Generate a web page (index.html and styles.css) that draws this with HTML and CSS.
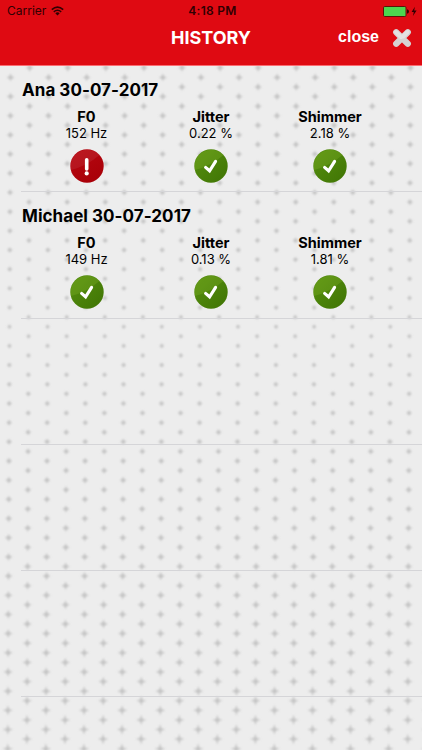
FILE: index.html
```html
<!DOCTYPE html>
<html lang="en">
<head>
    <meta charset="UTF-8">
    <title>History</title>
    <link rel="stylesheet" href="styles.css">
</head>
<body>

<!-- icons used in the list -->
<svg class="defs" width="0" height="0">
    <defs>
        <linearGradient id="green" x1="0" y1="0" x2="1" y2="1">
            <stop offset="0" stop-color="#579010"/>
            <stop offset="1" stop-color="#3f7404"/>
        </linearGradient>
        <linearGradient id="red" x1="0" y1="0" x2="0.6" y2="1">
            <stop offset="0" stop-color="#b80812"/>
            <stop offset="1" stop-color="#a90008"/>
        </linearGradient>
        <symbol id="ok" viewBox="0 0 34 34">
            <circle cx="17" cy="17" r="16.7" fill="url(#green)"/>
            <path d="M1 21 A16.7 16.7 0 0 1 29.5 6 Q17 17 1 21Z" fill="#8fc030" opacity="0.25"/>
            <path d="M11.6 18.4 L15.6 21.8 L21.6 12.4" fill="none" stroke="#fff" stroke-width="3.1" stroke-linecap="round"/>
        </symbol>
        <symbol id="bad" viewBox="0 0 34 34">
            <circle cx="17" cy="17" r="16.7" fill="url(#red)"/>
            <path d="M1 21 A16.7 16.7 0 0 1 29.5 6 Q17 17 1 21Z" fill="#fff" opacity="0.07"/>
            <path d="M16.7 10.8 V20" stroke="#fff" stroke-width="3.6" stroke-linecap="round"/>
            <circle cx="16.7" cy="24.4" r="2.1" fill="#fff"/>
        </symbol>
    </defs>
</svg>

<div class="app">
    <svg id="pattern" class="pattern" width="422" height="750"></svg>

    <div class="header">
        <div class="statusbar">
            <div class="carrier">
                <span>Carrier</span>
                <svg width="13" height="10" viewBox="0 0 13 10">
                    <path d="M0.8 3.7 Q6.5 -1.5 12.2 3.7" fill="none" stroke="#300002" stroke-width="1.6"/>
                    <path d="M2.8 5.9 Q6.5 2.6 10.2 5.9" fill="none" stroke="#300002" stroke-width="1.5"/>
                    <path d="M4.3 7.2 Q6.5 5.4 8.7 7.2 L6.5 9.5Z" fill="#300002"/>
                </svg>
            </div>
            <div class="time">4:18 PM</div>
            <div class="battery">
                <svg width="35" height="11" viewBox="0 0 35 11">
                    <rect x="0.5" y="0.5" width="22.5" height="10" rx="1.2" fill="#4cd64f" stroke="#5a1208"/>
                    <path d="M24 3.2 Q26 3.6 26 5.5 Q26 7.4 24 7.8Z" fill="#300002"/>
                    <path d="M31.9 0.8 L28.6 6 H30.8 L29.9 10 L33.6 4.6 H31.2Z" fill="#300002"/>
                </svg>
            </div>
        </div>
        <div class="navbar">
            <h1>HISTORY</h1>
            <div class="close">
                <span>close</span>
                <svg width="20" height="20" viewBox="0 0 20 20">
                    <path d="M4.2 4.2 L15.8 15.8 M15.8 4.2 L4.2 15.8" stroke="#d6d2d2" stroke-width="6.2" stroke-linecap="round"/>
                    <path d="M4 4 L9 9 M15.5 4 L11 8.5" stroke="#fff" opacity="0.35" stroke-width="4" stroke-linecap="round"/>
                </svg>
            </div>
        </div>
    </div>

    <div class="list">
        <div class="row">
            <h2>Ana 30-07-2017</h2>
            <div class="values">
                <div class="value"><b>F0</b><span>152 Hz</span><svg><use href="#bad"/></svg></div>
                <div class="value"><b>Jitter</b><span>0.22 %</span><svg><use href="#ok"/></svg></div>
                <div class="value"><b>Shimmer</b><span>2.18 %</span><svg><use href="#ok"/></svg></div>
            </div>
        </div>
        <div class="row">
            <h2>Michael 30-07-2017</h2>
            <div class="values">
                <div class="value"><b>F0</b><span>149 Hz</span><svg><use href="#ok"/></svg></div>
                <div class="value"><b>Jitter</b><span>0.13 %</span><svg><use href="#ok"/></svg></div>
                <div class="value"><b>Shimmer</b><span>1.81 %</span><svg><use href="#ok"/></svg></div>
            </div>
        </div>
        <div class="row"></div>
        <div class="row"></div>
        <div class="row"></div>
    </div>
</div>

<script src="pattern.js"></script>
</body>
</html>
```

FILE: styles.css
```css
* {
    box-sizing: border-box;
}

body {
    margin: 0;
    font-family: Inter, "Liberation Sans", sans-serif;
    color: #000;
}

.defs {
    position: absolute;
}

.app {
    position: relative;
    width: 422px;
    height: 750px;
    overflow: hidden;
    background-color: #ededed;
}

.pattern {
    position: absolute;
    top: 0;
    left: 0;
}

.header {
    position: relative;
    height: 66px;
    background-color: #df0a12;
    border-bottom: 1px solid #fb6c72;
}

.statusbar {
    display: grid;
    grid-template-columns: 1fr auto 1fr;
    align-items: center;
    height: 22px;
    padding: 0 4px 0 7px;
    font-size: 12px;
    line-height: 22px;
    color: #300002;
}

.carrier {
    display: flex;
    align-items: center;
    gap: 5px;
}

.time {
    font-weight: 600;
    letter-spacing: 0.3px;
}

.battery {
    display: flex;
    justify-content: flex-end;
}

.navbar {
    display: grid;
    grid-template-columns: 1fr auto 1fr;
    height: 32px;
    padding-right: 10px;
    color: #fff;
}

.navbar h1 {
    grid-column: 2;
    margin: 0;
    padding-left: 10px;
    font-size: 18px;
    font-weight: 650;
    line-height: 32px;
}

.close {
    display: flex;
    justify-content: flex-end;
    align-items: center;
    gap: 13px;
}

.close span {
    font-family: "Liberation Sans", sans-serif;
    font-size: 16px;
    font-weight: bold;
    line-height: 20px;
    padding-bottom: 2px;
}

.list {
    position: relative;
}

.row {
    height: 126.3px;
    margin-left: 21px;
    border-bottom: 1px solid #d5d5d8;
}

.row h2 {
    margin: 0;
    padding: 13px 0 0 1px;
    font-size: 17px;
    font-weight: 700;
    line-height: 22px;
    letter-spacing: 0.05px;
}

.values {
    display: grid;
    grid-template-columns: 131px 118px 120px;
    padding-top: 7px;
}

.value {
    display: flex;
    flex-direction: column;
    align-items: center;
}

.value b {
    font-size: 14.5px;
    font-weight: 700;
    line-height: 17px;
}

.value span {
    font-size: 13px;
    line-height: 17px;
}

.value svg {
    width: 34px;
    height: 34px;
    margin-top: 7px;
}
```

FILE: pattern.js
```js
// background of small crosses, every second row is shifted by half a step
const svg = document.getElementById("pattern");
const stepX = 38.08;
const stepY = 9.59;
let shapes = "";

for (let row = 0; row < 72; row++) {
    const y = 67.8 + row * stepY;
    const start = (row % 2 ? 10.6 : 29.7) - (y - 68) * 0.0042;
    // arms are shortest in the middle of the screen
    const arm = y < 330 ? 2.2 + (330 - y) / 262 * 1.8 : 2.2 + (y - 330) / 420 * 3.2;
    const core = 2.1 - Math.abs(y - 330) / 420 * 0.6;
    for (let x = start - stepX; x < 440; x += stepX) {
        shapes += `<path d="M${x - arm} ${y} L${x} ${y - core} L${x + arm} ${y} L${x} ${y + core} Z
            M${x} ${y - arm} L${x + core} ${y} L${x} ${y + arm} L${x - core} ${y} Z"/>`;
    }
}
svg.innerHTML = `<filter id="soft"><feGaussianBlur stdDeviation="0.8"/></filter>
    <g fill="#b0b0b0" fill-opacity="0.72" filter="url(#soft)">${shapes}</g>`;
```
